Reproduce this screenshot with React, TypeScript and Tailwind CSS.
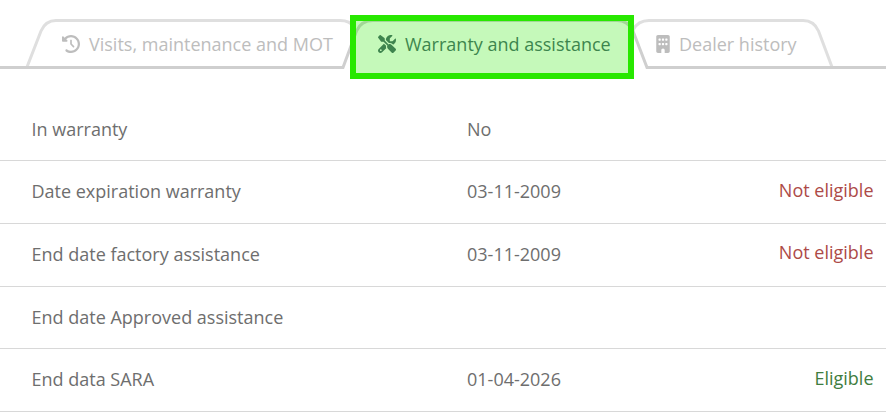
import { FaBuilding, FaClockRotateLeft, FaScrewdriverWrench } from 'react-icons/fa6';
import type { IconType } from 'react-icons';
import clsx from 'clsx';

interface Tab {
  label: string;
  icon: IconType;
  className: string;
  iconClassName: string;
}

interface Row {
  label: string;
  value?: string;
  eligible?: boolean;
}

const tabs: Tab[] = [
  {
    label: 'Visits, maintenance and MOT',
    icon: FaClockRotateLeft,
    className: 'w-[316px] text-[#bdbdbd]',
    iconClassName: 'w-[18px]',
  },
  {
    label: 'Warranty and assistance',
    icon: FaScrewdriverWrench,
    className: 'w-[278px] text-[#465f6b]',
    iconClassName: 'w-[18px]',
  },
  {
    label: 'Dealer history',
    icon: FaBuilding,
    className: 'w-[200px] text-[#bdbdbd]',
    iconClassName: 'w-[14px]',
  },
];

const rows: Row[] = [
  { label: 'In warranty', value: 'No' },
  { label: 'Date expiration warranty', value: '03-11-2009', eligible: false },
  { label: 'End date factory assistance', value: '03-11-2009', eligible: false },
  { label: 'End date Approved assistance' },
  { label: 'End data SARA', value: '01-04-2026', eligible: true },
];

// Slanted tab borders and the baseline under the inactive tabs
function TabOutlines() {
  return (
    <svg className="absolute inset-0" width="886" height="80" viewBox="0 0 886 80" fill="none">
      <path d="M27 67 L41 31 Q45.5 20.5 56 20.5 H340 Q350 20.5 354 27" stroke="#dfdfdf" strokeWidth="3" />
      <path d="M633 30 Q638 20.5 649 20.5 H803 Q814 20.5 818.5 31 L832 67" stroke="#dfdfdf" strokeWidth="3" />
      <path
        d="M0 67.5 H343 L356.5 31 Q361 20.5 373 20.5 H617 Q628 20.5 633 31 L647 67.5 H886"
        stroke="#cfcfcf"
        strokeWidth="3"
      />
    </svg>
  );
}

export default function App() {
  return (
    <div className="h-[420px] overflow-hidden bg-white font-['Open_Sans','Noto_Sans',sans-serif] text-[18px] leading-6 text-[#6e6e6e]">
      <nav className="relative flex h-[98.4px] items-start pl-[62px] pt-8">
        <TabOutlines />
        {tabs.map(({ label, icon: Icon, className, iconClassName }) => (
          <button
            key={label}
            type="button"
            className={clsx('relative flex h-6 items-center gap-[9px] whitespace-nowrap', className)}
          >
            <Icon className={clsx('shrink-0', iconClassName)} />
            {label}
          </button>
        ))}
        <div className="pointer-events-none absolute left-[350px] top-[15px] h-16 w-[284px] border-[6px] border-[#28e800] bg-[#28e800]/27 bg-clip-padding" />
      </nav>

      <dl>
        {rows.map(({ label, value, eligible }) => (
          <div
            key={label}
            className="flex h-[62.72px] items-center border-b border-[#d8d8d8] pb-[1.4px] pl-[31.5px] pr-[12.5px]"
          >
            <dt className="w-[435.5px]">{label}</dt>
            <dd className="flex-1">{value}</dd>
            {eligible !== undefined && (
              <dd className={clsx('pb-[3.2px]', eligible ? 'text-[#3f7d40]' : 'text-[#ad4a48]')}>
                {eligible ? 'Eligible' : 'Not eligible'}
              </dd>
            )}
          </div>
        ))}
      </dl>
    </div>
  );
}
